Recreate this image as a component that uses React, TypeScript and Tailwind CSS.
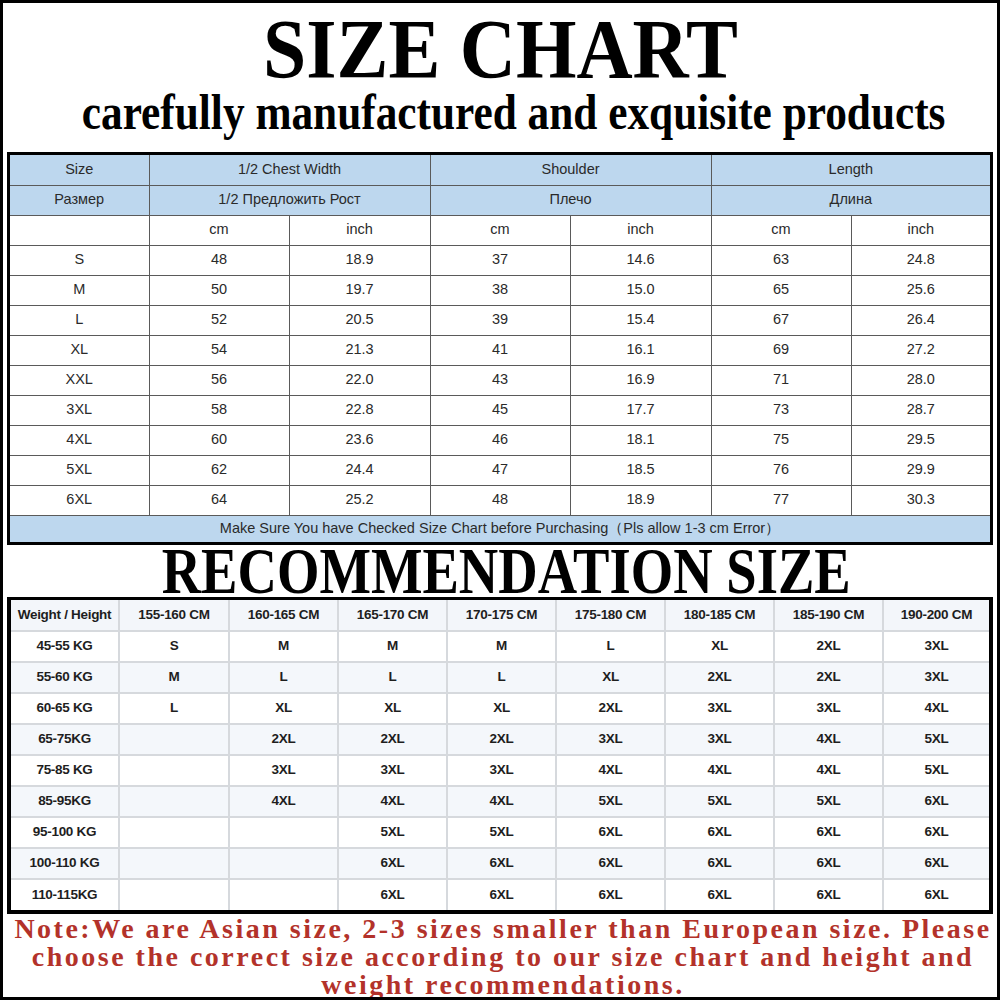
import React from "react";

const t1Rows = [
  ["S", "48", "18.9", "37", "14.6", "63", "24.8"],
  ["M", "50", "19.7", "38", "15.0", "65", "25.6"],
  ["L", "52", "20.5", "39", "15.4", "67", "26.4"],
  ["XL", "54", "21.3", "41", "16.1", "69", "27.2"],
  ["XXL", "56", "22.0", "43", "16.9", "71", "28.0"],
  ["3XL", "58", "22.8", "45", "17.7", "73", "28.7"],
  ["4XL", "60", "23.6", "46", "18.1", "75", "29.5"],
  ["5XL", "62", "24.4", "47", "18.5", "76", "29.9"],
  ["6XL", "64", "25.2", "48", "18.9", "77", "30.3"],
];

const t2Head = [
  "Weight / Height",
  "155-160 CM",
  "160-165 CM",
  "165-170 CM",
  "170-175 CM",
  "175-180 CM",
  "180-185 CM",
  "185-190 CM",
  "190-200 CM",
];

const t2Rows = [
  ["45-55 KG", "S", "M", "M", "M", "L", "XL", "2XL", "3XL"],
  ["55-60 KG", "M", "L", "L", "L", "XL", "2XL", "2XL", "3XL"],
  ["60-65 KG", "L", "XL", "XL", "XL", "2XL", "3XL", "3XL", "4XL"],
  ["65-75KG", "", "2XL", "2XL", "2XL", "3XL", "3XL", "4XL", "5XL"],
  ["75-85 KG", "", "3XL", "3XL", "3XL", "4XL", "4XL", "4XL", "5XL"],
  ["85-95KG", "", "4XL", "4XL", "4XL", "5XL", "5XL", "5XL", "6XL"],
  ["95-100 KG", "", "", "5XL", "5XL", "6XL", "6XL", "6XL", "6XL"],
  ["100-110 KG", "", "", "6XL", "6XL", "6XL", "6XL", "6XL", "6XL"],
  ["110-115KG", "", "", "6XL", "6XL", "6XL", "6XL", "6XL", "6XL"],
];

const t1Widths = [139, 140, 141, 140, 141, 140, 139];
const t2Widths = [108, 110, 109, 109, 109, 109, 109, 109, 106];

export default function App() {
  const serif = { fontFamily: '"Liberation Serif", "Times New Roman", serif' };
  return (
    <div className="w-[1000px] h-[1000px] bg-white border-[3px] border-black flex flex-col overflow-hidden font-['Liberation_Sans',Arial,sans-serif]">
      {/* Header */}
      <div className="h-[149px] flex flex-col items-center shrink-0" style={serif}>
        <div className="pt-[6px] h-[86px] leading-[80px] text-[85px] font-bold text-black whitespace-nowrap scale-x-[0.915]">
          SIZE CHART
        </div>
        <div className="mt-[-1px] ml-[28px] leading-[48px] text-[50px] font-bold text-black whitespace-nowrap scale-x-[0.866]">
          carefully manufactured and exquisite products
        </div>
      </div>

      {/* Table 1 */}
      <div className="mx-[4px] border-[3px] border-black shrink-0">
        <table className="w-full table-fixed border-collapse text-[14.5px] text-[#2a2a2a]">
          <colgroup>
            {t1Widths.map((w, i) => (
              <col key={i} style={{ width: w }} />
            ))}
          </colgroup>
          <tbody>
            <tr className="h-[30px] bg-[#bdd7ee]">
              <td className="border border-[#5a5a5a] border-t-0 border-l-0 text-center">Size</td>
              <td colSpan={2} className="border border-[#5a5a5a] border-t-0 text-center">1/2 Chest Width</td>
              <td colSpan={2} className="border border-[#5a5a5a] border-t-0 text-center">Shoulder</td>
              <td colSpan={2} className="border border-[#5a5a5a] border-t-0 border-r-0 text-center">Length</td>
            </tr>
            <tr className="h-[30px] bg-[#bdd7ee]">
              <td className="border border-[#5a5a5a] border-l-0 text-center">Размер</td>
              <td colSpan={2} className="border border-[#5a5a5a] text-center">1/2 Предложить Рост</td>
              <td colSpan={2} className="border border-[#5a5a5a] text-center">Плечо</td>
              <td colSpan={2} className="border border-[#5a5a5a] border-r-0 text-center">Длина</td>
            </tr>
            <tr className="h-[30px]">
              <td className="border border-[#5a5a5a] border-l-0"></td>
              <td className="border border-[#5a5a5a] text-center">cm</td>
              <td className="border border-[#5a5a5a] text-center">inch</td>
              <td className="border border-[#5a5a5a] text-center">cm</td>
              <td className="border border-[#5a5a5a] text-center">inch</td>
              <td className="border border-[#5a5a5a] text-center">cm</td>
              <td className="border border-[#5a5a5a] border-r-0 text-center">inch</td>
            </tr>
            {t1Rows.map((r, ri) => (
              <tr key={ri} className="h-[30px]">
                {r.map((c, ci) => (
                  <td
                    key={ci}
                    className={
                      "border border-[#5a5a5a] text-center" +
                      (ci === 0 ? " border-l-0" : "") +
                      (ci === 6 ? " border-r-0" : "")
                    }
                  >
                    {c}
                  </td>
                ))}
              </tr>
            ))}
            <tr className="h-[27px] bg-[#bdd7ee]">
              <td colSpan={7} className="border border-[#5a5a5a] border-b-0 border-l-0 border-r-0 text-center">
                Make Sure You have Checked Size Chart before Purchasing（Pls allow 1-3 cm Error）
              </td>
            </tr>
          </tbody>
        </table>
      </div>

      {/* Recommendation title */}
      <div
        className="h-[52px] shrink-0 flex justify-center pl-[12px] leading-[52px] text-[65px] font-bold text-black whitespace-nowrap"
        style={serif}
      >
        <span className="inline-block scale-x-[0.84]">RECOMMENDATION SIZE</span>
      </div>

      {/* Table 2 */}
      <div className="mx-[4px] border-4 border-black border-t-[3px] shrink-0">
        <table className="w-full table-fixed border-collapse text-[13.5px] font-bold text-[#1e1e1e] tracking-[-0.3px]">
          <colgroup>
            {t2Widths.map((w, i) => (
              <col key={i} style={{ width: w }} />
            ))}
          </colgroup>
          <tbody>
            <tr className="h-[31px] bg-[#f3f6fa]">
              {t2Head.map((h, i) => (
                <td
                  key={i}
                  className={
                    "border-2 border-[#d6d9dd] border-t-0 text-center whitespace-nowrap" +
                    (i === 0 ? " border-l-0" : "") +
                    (i === 8 ? " border-r-0" : "")
                  }
                >
                  {h}
                </td>
              ))}
            </tr>
            {t2Rows.map((r, ri) => (
              <tr key={ri} className={"h-[31px] " + (ri % 2 === 1 ? "bg-[#f4f7fb]" : "bg-white")}>
                {r.map((c, ci) => (
                  <td
                    key={ci}
                    className={
                      "border-2 border-[#d6d9dd] text-center whitespace-nowrap" +
                      (ci === 0 ? " border-l-0" : "") +
                      (ci === 8 ? " border-r-0" : "") +
                      (ri === t2Rows.length - 1 ? " border-b-0" : "")
                    }
                  >
                    {c}
                  </td>
                ))}
              </tr>
            ))}
          </tbody>
        </table>
      </div>

      {/* Note */}
      <div
        className="flex-1 mt-[1px] pl-[6px] text-center text-[#b3322a] font-bold text-[28px] leading-[28px] tracking-[2.5px]"
        style={serif}
      >
        <div className="whitespace-nowrap">Note:We are Asian size, 2-3 sizes smaller than European size. Please</div>
        <div className="whitespace-nowrap">choose the correct size according to our size chart and height and</div>
        <div className="whitespace-nowrap">weight recommendations.</div>
      </div>
    </div>
  );
}
